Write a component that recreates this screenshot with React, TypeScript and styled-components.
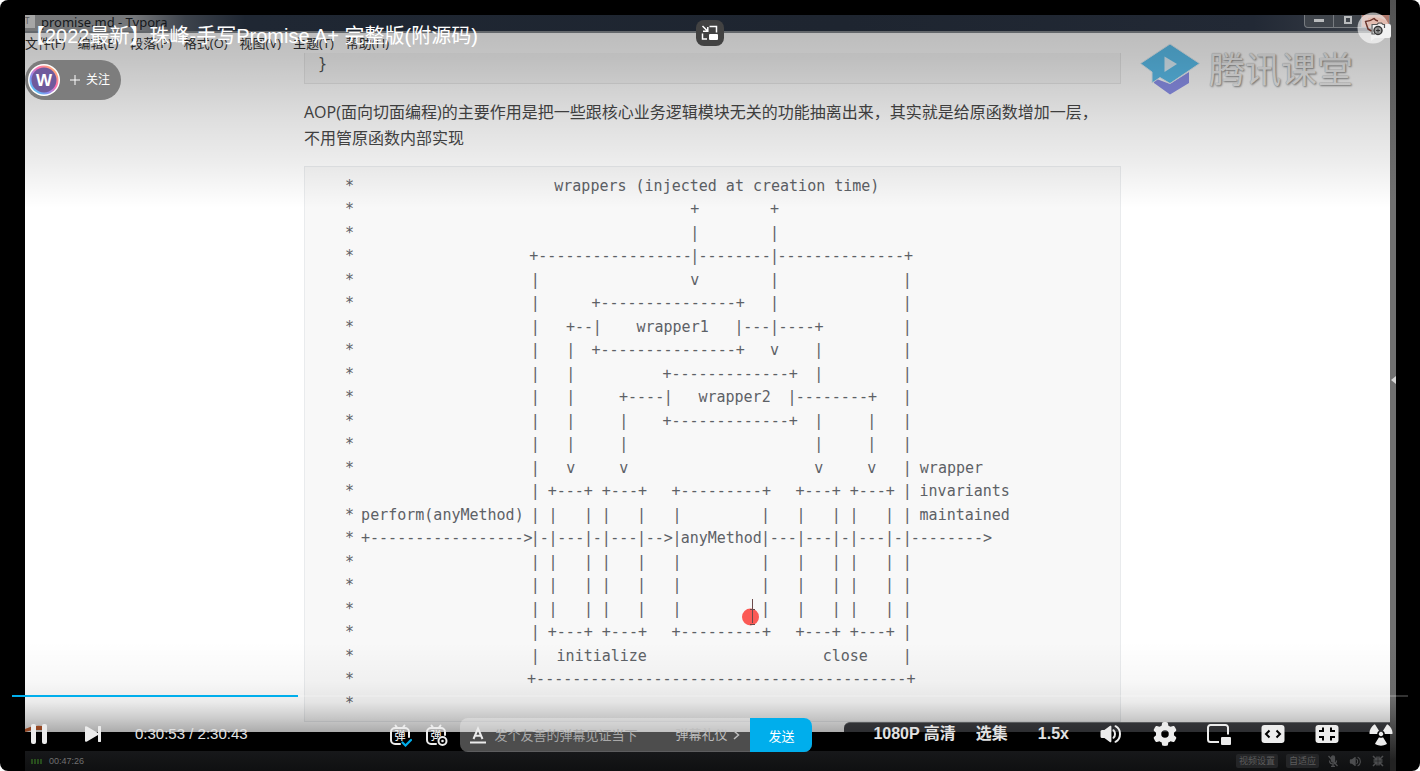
import React from "react";
import styled, { createGlobalStyle } from "styled-components";
import { FaGear } from "react-icons/fa6";
import { FaRadiation } from "react-icons/fa";

const SANS = `"Liberation Sans", "Noto Sans CJK SC", sans-serif`;
const DOC = `"Open Sans", "Noto Sans CJK SC", sans-serif`;
const MONO = `"DejaVu Sans Mono", "Noto Sans CJK SC", monospace`;

const GlobalStyle = createGlobalStyle`
  * { box-sizing: border-box; }
  body { margin: 0; background: #fff; font-family: ${SANS}; }
  button { border: 0; padding: 0; margin: 0; background: none; color: inherit; font: inherit; cursor: pointer; }
  svg { display: block; }
`;

/* ---------- stage ---------- */
const Player = styled.main`
  position: relative;
  display: grid;
  grid-template-columns: 25px minmax(0, 1fr) 6px 24px;
  min-height: 100vh;
  background: #000;
  border-radius: 8px;
  overflow: hidden;
`;
const Recording = styled.section`
  grid-column: 2;
  display: flex;
  flex-direction: column;
  padding-top: 15px;
`;
const SideStrip = styled.button`
  grid-column: 3;
  display: flex;
  align-items: center;
  justify-content: flex-end;
  padding-bottom: 12px !important;
  background: linear-gradient(#525252, #707070 200px, #707070 640px, #6a6a6a 700px, #222 760px) !important;
`;

/* ---------- recorded editor window ---------- */
const TitleBar = styled.header`
  display: flex;
  align-items: flex-start;
  justify-content: space-between;
  height: 18px;
  border-bottom: 2px solid #63676b;
  background: linear-gradient(90deg, #777879 0, #75777a 110px, #3d434c 160px, #1f2733 220px, #1e2530 60%, #222935 90%, #3b4049);
`;
const WindowName = styled.h2`
  display: flex;
  align-items: flex-start;
  gap: 6px;
  margin: 0;
  font: 400 13px/14px "Noto Sans", sans-serif;
  color: #14171b;
`;
const FileMark = styled.span`
  width: 10px;
  height: 13px;
  background: #a6a6a6;
  color: #555;
  font-size: 8px;
  line-height: 12px;
`;
const WindowButtons = styled.div`
  display: flex;
  height: 13px;
  border: 1px solid #777b80;
  border-top: 0;
  border-radius: 0 0 4px 4px;
  background: #40454c;
`;
const WindowButton = styled.button<{ $close?: boolean }>`
  display: flex;
  align-items: center;
  justify-content: center;
  width: 28px;
  color: #b9bbbd;
  background: ${(p) => (p.$close ? "#b0796c" : "transparent")} !important;
  & + & { border-left: 1px solid #777b80; }
`;
const Editor = styled.div`
  position: relative;
  flex: 1;
  background: #fff;
`;
const MenuBar = styled.nav`
  display: flex;
  gap: 12px;
  height: 20px;
  font: 13px/20px ${DOC};
  color: #333;
`;
const Article = styled.article`
  max-width: 827px;
  margin: 0 auto;
  padding: 0 0 10px 10px;
`;
const CodeTail = styled.pre`
  height: 31px;
  margin: 0;
  padding: 0 13px;
  border: 1px solid #e9e9e9;
  border-top: 0;
  background: #f8f8f8;
  font: 15px/22px ${MONO};
  color: #555;
`;
const Paragraph = styled.p`
  margin: 15px 0;
  font: 16px/26px ${DOC};
  color: #484848;
  white-space: nowrap;
`;
const CodeBlock = styled.div`
  position: relative;
  padding: 7px 40px;
  border: 1px solid #e9ebed;
  background: #f8f8f8;
`;
const Diagram = styled.div`
  display: grid;
  grid-template-rows: repeat(23, minmax(0, 1fr));
  max-width: 664px;
  height: 540px;
  font: 15px/24px ${MONO};
  color: #5d6166;
`;
const DiagramRow = styled.div`
  display: grid;
  grid-template-columns: repeat(75, minmax(0, 1fr));
`;
const Token = styled.span<{ $from: number; $span: number }>`
  grid-row: 1;
  grid-column: ${(p) => p.$from + 1} / span ${(p) => p.$span};
  display: flex;
  justify-content: center;
  white-space: pre;
`;
const Pointer = styled.svg`
  position: absolute;
  left: 436px;
  top: 430px;
`;
const Watermark = styled.div`
  position: absolute;
  top: 8px;
  right: 37px;
  display: flex;
  align-items: center;
  gap: 9px;
`;
const WatermarkName = styled.span`
  padding-bottom: 4px;
  font: 36px/52px "Noto Sans CJK SC", sans-serif;
  color: #f0f0f0;
  text-shadow: 1px 1px 2px #8c8c8c, 0 0 1px #aaa;
`;
const DockEdge = styled.div`
  display: flex;
  justify-content: space-between;
  position: absolute;
  left: 0;
  right: 0;
  bottom: 0;
  height: 10px;
  overflow: hidden;
`;
const Dock = styled.div`
  width: 40%;
  border-top: 1px solid #77797c;
  border-radius: 6px 0 0 0;
  background: #434449;
`;
const DarkBand = styled.div`
  height: 19px;
  background: #000;
`;
const StatusBar = styled.footer`
  display: flex;
  align-items: center;
  height: 20px;
  padding: 0 6px;
  background: linear-gradient(#17181a, #0f1011);
  font: 9px/12px ${SANS};
  color: #707070;
`;
const StatusTime = styled.span`
  margin: 0 auto 0 6px;
`;
const Chip = styled.button`
  height: 14px;
  margin-right: 8px !important;
  padding: 0 3px !important;
  border-radius: 2px;
  background: #242527 !important;
  font-size: 9px !important;
  line-height: 14px !important;
  color: #5c5c5c;
`;
const StatusIcons = styled.div`
  display: flex;
  gap: 10px;
  color: #4c4d4f;
`;

/* ---------- player overlays ---------- */
const Shade = styled.div<{ $bottom?: boolean }>`
  position: absolute;
  left: 25px;
  right: 30px;
  pointer-events: none;
  ${(p) =>
    p.$bottom
      ? `bottom: 39px; height: 90px; background: linear-gradient(rgba(0,0,0,0), rgba(0,0,0,.03) 40px, rgba(0,0,0,.08) 60px, rgba(0,0,0,.2) 76px, rgba(0,0,0,.33));`
      : `top: 33px; height: 175px; background: linear-gradient(rgba(0,0,0,.26), rgba(0,0,0,.23) 25px, rgba(0,0,0,.13) 85px, rgba(0,0,0,.07) 130px, rgba(0,0,0,0));`}
`;
const TopOverlay = styled.header`
  position: absolute;
  top: 0;
  left: 0;
  right: 0;
  padding: 22px 25px 0;
`;
const VideoTitle = styled.h1`
  margin: 0;
  font: 400 20px/28px ${SANS};
  color: #fff;
`;
const FollowPill = styled.button`
  display: flex;
  align-items: center;
  width: 96px;
  height: 40px;
  margin-top: 10px !important;
  padding-left: 3px !important;
  border-radius: 20px;
  background: #7d7d7d !important;
  color: #fff;
  font: 12px/16px ${SANS} !important;
  svg + svg { margin: 0 6px 0 10px; }
`;
const PipToggle = styled.button`
  position: absolute;
  top: 20px;
  left: 50%;
  display: flex;
  align-items: center;
  justify-content: center;
  width: 28px;
  height: 26px;
  margin-left: -14px !important;
  border-radius: 8px;
  background: #424242 !important;
`;
const Capture = styled.button`
  position: absolute;
  top: 12px;
  right: 29px;
`;
const BottomOverlay = styled.div`
  position: absolute;
  left: 0;
  right: 0;
  bottom: 19px;
  padding: 0 12px;
`;
const Progress = styled.div`
  height: 2px;
  background: rgba(255, 255, 255, 0.2);
`;
const Played = styled.div`
  height: 2px;
  background: #00aeec;
`;
const Controls = styled.div`
  display: flex;
  align-items: center;
  height: 34px;
  margin-top: 21px;
  padding: 0 15px 0 19px;
  color: #ececec;
`;
const Transport = styled.div`
  display: flex;
  align-items: center;
  flex: 1;
  padding-bottom: 2px;
`;
const IconButton = styled.button<{ $after?: number }>`
  display: flex;
  align-items: center;
  justify-content: center;
  margin-right: ${(p) => p.$after ?? 0}px !important;
`;
const Clock = styled.span`
  font: 15px/18px ${SANS};
  color: #e2e2e2;
`;
const Danmaku = styled.form`
  display: flex;
  align-items: center;
  margin: 0 61px 0 0;
`;
const SendBox = styled.div`
  display: flex;
  align-items: center;
  width: 352px;
  height: 34px;
  border-radius: 8px;
  overflow: hidden;
  background: rgba(255, 255, 255, 0.3);
  padding-left: 10px;
`;
const DanmakuInput = styled.input`
  flex: 1;
  min-width: 0;
  height: 30px;
  padding: 0;
  border: 0;
  outline: 0;
  background: none;
  color: #fff;
  font: 13px/18px ${SANS};
  &::placeholder { color: #a9a9a9; opacity: 1; }
`;
const Etiquette = styled.a`
  display: flex;
  align-items: center;
  gap: 6px;
  margin-right: 10px;
  font: 13px/18px ${SANS};
  color: #bdbdbd;
  text-decoration: none;
`;
const SendButton = styled.button`
  width: 62px;
  height: 34px;
  background: #00aeec !important;
  color: #fff;
  font-size: 13px !important;
`;
const Settings = styled.div`
  display: flex;
  align-items: center;
  gap: 30px;
  padding-bottom: 2px;
`;
const TextPair = styled.div`
  display: flex;
  gap: 20px;
`;
const TextButton = styled.button`
  font: 700 16px/20px ${SANS} !important;
  color: #e2e2e2;
  white-space: nowrap;
`;

/* Diagram source, one string for each line after the leading "* ". */
const PIPES = "                   | |   | |   |   |         |   |   | |   | |";
const BOXES = "                   | +---+ +---+   +---------+   +---+ +---+ |";
const LINES = [
  "                      wrappers (injected at creation time)",
  "                                     +        +",
  "                                     |        |",
  "                   +-----------------|--------|--------------+",
  "                   |                 v        |              |",
  "                   |      +---------------+   |              |",
  "                   |   +--|    wrapper1   |---|----+         |",
  "                   |   |  +---------------+   v    |         |",
  "                   |   |          +-------------+  |         |",
  "                   |   |     +----|   wrapper2  |--------+   |",
  "                   |   |     |    +-------------+  |     |   |",
  "                   |   |     |                     |     |   |",
  "                   |   v     v                     v     v   | wrapper",
  BOXES + " invariants",
  "perform(anyMethod) | |   | |   |   |         |   |   | |   | | maintained",
  "+----------------->|-|---|-|---|-->|anyMethod|---|---|-|---|-|-------->",
  PIPES,
  PIPES,
  PIPES,
  BOXES,
  "                   |  initialize                    close    |",
  "                   +-----------------------------------------+",
  "",
];

function Line({ text }: { text: string }) {
  const tokens = Array.from(text.matchAll(/\||[^\s|]+(?: [^\s|]+)*/g));
  return (
    <DiagramRow>
      <Token $from={0} $span={1}>*</Token>
      {tokens.map((t) => (
        <Token key={t.index} $from={(t.index ?? 0) + 2} $span={t[0].length}>
          {t[0]}
        </Token>
      ))}
    </DiagramRow>
  );
}

const DanmakuIcon = ({ kind }: { kind: "on" | "settings" }) => (
  <svg width="24" height="24" viewBox="0 0 24 24" fill="none" stroke="#ececec" strokeWidth="2" strokeLinecap="round">
    <path d="M7.5 2.5 9.3 5M16.5 2.5 14.7 5" />
    <path d={kind === "on" ? "M12 21H7a4 4 0 0 1-4-4V9a4 4 0 0 1 4-4h10a4 4 0 0 1 4 4v5" : "M12 21H7a4 4 0 0 1-4-4V9a4 4 0 0 1 4-4h10a4 4 0 0 1 4 4v3"} />
    <text x="12" y="17" textAnchor="middle" fontSize="11" fontFamily="Noto Sans CJK SC, sans-serif" fontWeight="500" fill="#ececec" stroke="none">弹</text>
    {kind === "on" ? (
      <path d="m14.5 19.5 3 3 5.5-5.5" stroke="#00aeec" strokeWidth="2.2" />
    ) : (
      <>
        <circle cx="18.5" cy="18" r="5.5" fill="#000" stroke="none" />
        <circle cx="18.5" cy="18" r="4" />
        <circle cx="18.5" cy="18" r="1.3" fill="#ececec" stroke="none" />
      </>
    )}
  </svg>
);

const VolumeIcon = ({ size = 24 }: { size?: number }) => (
  <svg width={size} height={size} viewBox="0 0 24 24" fill="currentColor">
    <path d="M10.8 3.9a1 1 0 0 1 1.6.8v14.6a1 1 0 0 1-1.6.8L5.4 16H3a1.5 1.5 0 0 1-1.5-1.5v-5A1.5 1.5 0 0 1 3 8h2.4z" />
    <path d="M14.5 8.2c2 1.8 2 5.8 0 7.6M16.5 4.2c6 3 6 12.6 0 15.6" fill="none" stroke="currentColor" strokeWidth="2" strokeLinecap="round" />
  </svg>
);

const menus = ["文件(F)", "编辑(E)", "段落(P)", "格式(O)", "视图(V)", "主题(T)", "帮助(H)"];

export default function App() {
  return (
    <>
      <GlobalStyle />
      <Player>
        <Recording>
          <TitleBar>
            <WindowName><FileMark>T</FileMark>promise.md - Typora</WindowName>
            <WindowButtons>
              <WindowButton aria-label="最小化">
                <svg width="12" height="4"><rect x="1" width="10" height="3" fill="currentColor" /></svg>
              </WindowButton>
              <WindowButton aria-label="最大化">
                <svg width="10" height="10" fill="none" stroke="currentColor" strokeWidth="2"><rect x="2" y="1" width="6" height="6" /></svg>
              </WindowButton>
              <WindowButton $close aria-label="关闭窗口" />
            </WindowButtons>
          </TitleBar>
          <Editor>
            <MenuBar>{menus.map((m) => <span key={m}>{m}</span>)}</MenuBar>
            <Article>
              <CodeTail>{"}"}</CodeTail>
              <Paragraph>
                AOP(面向切面编程)的主要作用是把一些跟核心业务逻辑模块无关的功能抽离出来，其实就是给原函数增加一层，
                <br />
                不用管原函数内部实现
              </Paragraph>
              <CodeBlock>
                <Diagram>{LINES.map((text, i) => <Line key={i} text={text} />)}</Diagram>
                <Pointer width="20" height="30" viewBox="0 0 20 30">
                  <circle cx="9.5" cy="20" r="8.5" fill="#fb5a55" />
                  <path d="M11.5 2v24M9 27.5h5M9 12.5h5" stroke="#6b4a4a" fill="none" />
                </Pointer>
              </CodeBlock>
            </Article>
            <Watermark>
              <svg width="60" height="52" viewBox="0 0 60 52">
                <path d="M14 35v5l16 11.500L49 40V29L30 41z" fill="#8d92ec" />
                <path d="M30 1 59.500 20.500 30 40.500 20 34.500l-8 5.500V29L.5 20.500z" fill="#5cc0ee" stroke="#e4eef4" />
                <path d="m24.500 13.500 12.500 7.500-12.500 8z" fill="#dff1fb" />
              </svg>
              <WatermarkName>腾讯课堂</WatermarkName>
            </Watermark>
            <DockEdge>
              <svg width="30" height="10"><path d="M0 7 Q8 3 17 4v4H8L0 10z" fill="#d0622f" /></svg>
              <Dock />
            </DockEdge>
          </Editor>
          <DarkBand />
          <StatusBar>
            <svg width="12" height="5" fill="#274d1c">
              {[0, 3, 6, 9].map((x) => <rect key={x} x={x} width="2" height="5" />)}
            </svg>
            <StatusTime>00:47:26</StatusTime>
            <Chip>视频设置</Chip>
            <Chip>自适应</Chip>
            <StatusIcons>
              <svg width="12" height="12" viewBox="0 0 12 12" fill="none" stroke="currentColor" strokeWidth="1.3">
                <rect x="4.5" y="1" width="3" height="6" rx="1.5" fill="currentColor" />
                <path d="M2.5 5.5c0 4.5 7 4.5 7 0M6 9v2.500M4 11.500h4M1.500 1l9 10" />
              </svg>
              <VolumeIcon size={13} />
              <svg width="12" height="12" viewBox="0 0 12 12" fill="none" stroke="currentColor" strokeWidth="1.5">
                <path d="M1 1l3.500 3.500M1.500 5H5V1.500M11 1 7.500 4.500M7 1.500V5h3.500M1 11l3.500-3.500M1.500 7H5v3.500M11 11 7.500 7.500M7 10.500V7h3.500" />
              </svg>
            </StatusIcons>
          </StatusBar>
        </Recording>
        <SideStrip aria-label="展开侧栏">
          <svg width="5" height="8"><path d="M5 0v8L0 4z" fill="#d4d4d4" /></svg>
        </SideStrip>

        <Shade />
        <Shade $bottom />

        <TopOverlay>
          <VideoTitle>【2022最新】珠峰-手写Promise A+ 完整版(附源码)</VideoTitle>
          <FollowPill>
            <svg width="32" height="32" viewBox="0 0 32 32">
              <defs>
                <linearGradient id="ring" x1="0" y1="1" x2="1" y2="0">
                  <stop offset="0" stopColor="#3ee6f5" />
                  <stop offset=".35" stopColor="#8a8cf0" />
                  <stop offset=".6" stopColor="#ff6fae" />
                  <stop offset="1" stopColor="#ffc857" />
                </linearGradient>
              </defs>
              <circle cx="16" cy="16" r="16" fill="#fff" />
              <circle cx="16" cy="16" r="14.5" fill="url(#ring)" />
              <circle cx="16" cy="16" r="12.5" fill="#6f5a9c" />
              <text x="16" y="22" textAnchor="middle" fontSize="17" fontWeight="700" fontFamily="Liberation Sans, sans-serif" fill="#fff">W</text>
            </svg>
            <svg width="10" height="10" stroke="#fff" strokeWidth="1"><path d="M5 0v10M0 5h10" /></svg>
            关注
          </FollowPill>
          <PipToggle aria-label="画中画">
            <svg width="18" height="16" viewBox="0 0 18 16" fill="none" stroke="#fff" strokeWidth="1.5">
              <path d="M8.500 1.500h7v6M1.500 8.500v5.500h4.500M1.500 1l5 5M6.800 2v4.300H2" />
              <rect x="8" y="9" width="9" height="6" rx="1" fill="#fff" stroke="none" />
            </svg>
          </PipToggle>
          <Capture aria-label="截图">
            <svg width="34" height="32" viewBox="0 0 34 32">
              <circle cx="16" cy="16" r="15.5" fill="#fff" fillOpacity=".62" />
              <path d="M11 6q10-2 17 2l4 4H14l-3 4z" fill="#e3bdb1" />
              <path d="M14 12h18a2 2 0 0 1 2 2v10a2 2 0 0 1-2 2H18l-4 3z" fill="#f2f2f2" />
              <path d="M14.500 19 11 17 8.500 9.500C12 9.500 15 8 17 6.500q1.500 2 4 2.500" fill="none" stroke="#6b352c" strokeWidth="1.5" strokeLinejoin="round" />
              <path d="M18 22h-3v-9.500h5l1.500-1.500h3l1.500 1.500h1.500V16" fill="none" stroke="#555" strokeWidth="1.2" />
              <circle cx="21" cy="18.500" r="4" fill="#999" stroke="#333" strokeWidth="1.5" />
              <path d="M21 16.500v4M19 18.500h4" stroke="#333" />
            </svg>
          </Capture>
        </TopOverlay>

        <BottomOverlay>
          <Progress role="progressbar" aria-label="播放进度" aria-valuenow={20}>
            <Played style={{ width: `${(1853 / 9043) * 100}%` }} />
          </Progress>
          <Controls>
            <Transport>
              <IconButton $after={38} aria-label="暂停">
                <svg width="16" height="20" fill="#ececec"><rect width="5" height="20" rx="2" /><rect x="11" width="5" height="20" rx="2" /></svg>
              </IconButton>
              <IconButton $after={34} aria-label="下一个">
                <svg width="16" height="16" fill="#ececec"><path d="M0 1.500Q0-.5 2 .6L13 7v-6a1.300 1.300 0 0 1 3 0v14a1.300 1.300 0 0 1-3 0V9L2 15.400Q0 16.500 0 14.500z" /></svg>
              </IconButton>
              <Clock>0:30:53 / 2:30:43</Clock>
            </Transport>
            <Danmaku onSubmit={(e) => e.preventDefault()}>
              <IconButton type="button" $after={12} aria-label="关闭弹幕"><DanmakuIcon kind="on" /></IconButton>
              <IconButton type="button" $after={12} aria-label="弹幕设置"><DanmakuIcon kind="settings" /></IconButton>
              <SendBox>
                <IconButton type="button" $after={8} aria-label="文字样式">
                  <svg width="16" height="18" viewBox="0 0 16 18" fill="none" stroke="#ececec" strokeWidth="2">
                    <path d="M3.500 13 8 2.500 12.500 13M5.200 9.800h5.600M0 16.500h16" />
                  </svg>
                </IconButton>
                <DanmakuInput aria-label="弹幕内容" placeholder="发个友善的弹幕见证当下" />
                <Etiquette href="#etiquette">
                  弹幕礼仪
                  <svg width="7" height="10" fill="none" stroke="currentColor" strokeWidth="1.5"><path d="m1 1 4.500 4L1 9" /></svg>
                </Etiquette>
                <SendButton type="submit">发送</SendButton>
              </SendBox>
            </Danmaku>
            <Settings>
              <TextPair>
                <TextButton>1080P 高清</TextButton>
                <TextButton>选集</TextButton>
              </TextPair>
              <TextButton>1.5x</TextButton>
              <IconButton aria-label="音量"><VolumeIcon /></IconButton>
              <IconButton aria-label="设置"><FaGear size={24} /></IconButton>
              <IconButton aria-label="小窗">
                <svg width="24" height="24" viewBox="0 0 24 24" fill="none" stroke="currentColor" strokeWidth="2">
                  <path d="M12 20H3.500A2.500 2.500 0 0 1 1 17.500V5.500A2.500 2.500 0 0 1 3.500 3h15A2.500 2.500 0 0 1 21 5.500v7" />
                  <rect x="14" y="15" width="10" height="8" rx="1" fill="currentColor" stroke="none" />
                </svg>
              </IconButton>
              <IconButton aria-label="宽屏">
                <svg width="24" height="24" viewBox="0 0 24 24">
                  <rect x="0.5" y="3" width="23" height="18" rx="3" fill="currentColor" />
                  <path d="M8.500 8.500 5 12l3.500 3.500M15.500 8.500 19 12l-3.500 3.500" fill="none" stroke="#000" strokeWidth="2" />
                </svg>
              </IconButton>
              <IconButton aria-label="网页全屏">
                <svg width="24" height="24" viewBox="0 0 24 24">
                  <rect x="0.5" y="3" width="23" height="18" rx="3" fill="currentColor" />
                  <path d="M4 9h4V5.500M20 9h-4V5.500M4 15h4v3.500M20 15h-4v3.500" fill="none" stroke="#000" strokeWidth="2" />
                </svg>
              </IconButton>
              <IconButton aria-label="全屏"><FaRadiation size={24} /></IconButton>
            </Settings>
          </Controls>
        </BottomOverlay>
      </Player>
    </>
  );
}
